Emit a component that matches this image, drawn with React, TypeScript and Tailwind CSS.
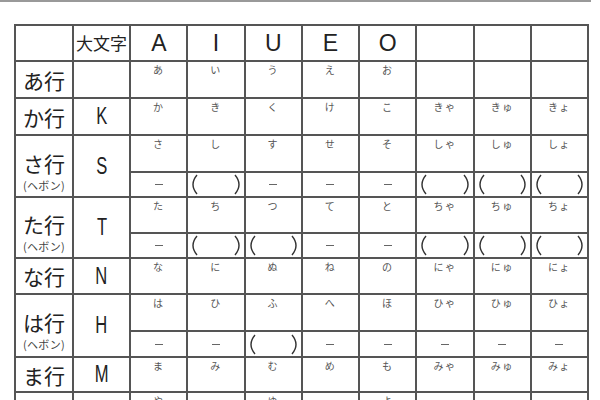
import React from "react"

type Row = {
  label: string
  letter: string
  kana: string[]
  sub?: string[]
  h: string
  subH?: string
}

const rows: Row[] = [
  { label: "あ行", letter: "", kana: ["あ", "い", "う", "え", "お", "", "", ""], h: "h-[35px]" },
  { label: "か行", letter: "K", kana: ["か", "き", "く", "け", "こ", "きゃ", "きゅ", "きょ"], h: "h-[35px]" },
  {
    label: "さ行",
    letter: "S",
    kana: ["さ", "し", "す", "せ", "そ", "しゃ", "しゅ", "しょ"],
    sub: ["-", "b", "-", "-", "-", "b", "b", "b"],
    h: "h-[35px]",
    subH: "h-[23px]",
  },
  {
    label: "た行",
    letter: "T",
    kana: ["た", "ち", "つ", "て", "と", "ちゃ", "ちゅ", "ちょ"],
    sub: ["-", "b", "b", "-", "-", "b", "b", "b"],
    h: "h-[34px]",
    subH: "h-[23px]",
  },
  { label: "な行", letter: "N", kana: ["な", "に", "ぬ", "ね", "の", "にゃ", "にゅ", "にょ"], h: "h-[34px]" },
  {
    label: "は行",
    letter: "H",
    kana: ["は", "ひ", "ふ", "へ", "ほ", "ひゃ", "ひゅ", "ひょ"],
    sub: ["-", "-", "b", "-", "-", "-", "-", "-"],
    h: "h-[35px]",
    subH: "h-[24px]",
  },
  { label: "ま行", letter: "M", kana: ["ま", "み", "む", "め", "も", "みゃ", "みゅ", "みょ"], h: "h-[33px]" },
  { label: "や行", letter: "Y", kana: ["や", "", "ゆ", "", "よ", "", "", ""], h: "h-[35px]" },
]

const jp = "font-['Noto_Sans_CJK_JP',sans-serif]"

function Bracket({ right }: { right?: boolean }) {
  return (
    <svg width="10" height="21" viewBox="0 0 10 21" className="shrink-0">
      <path
        d={right ? "M2 1 Q10 10.5 2 20" : "M8 1 Q0 10.5 8 20"}
        fill="none"
        stroke="#333"
        strokeWidth="1.4"
      />
    </svg>
  )
}

function SubCell({ v, h }: { v: string; h?: string }) {
  if (v === "b") {
    return (
      <div className={`bg-white flex items-center justify-between px-[1px] ${h}`}>
        <Bracket />
        <Bracket right />
      </div>
    )
  }
  return (
    <div className={`bg-white flex items-center justify-center ${h}`}>
      <div className="w-[8px] h-px bg-[#666]" />
    </div>
  )
}

export default function App() {
  return (
    <div className="w-[600px] h-[400px] overflow-hidden bg-white">
      <div className="w-[591px] h-[2px] bg-[#999]" />
      <div className="ml-[14px] mt-[22px] w-[575px] p-[2px] bg-[#555] grid grid-cols-[56px_repeat(9,1fr)] gap-[2px]">
        <div className="bg-white h-[34px]" />
        <div className={`bg-white h-[34px] flex items-center justify-center text-[17px] text-[#222] ${jp}`}>
          大文字
        </div>
        {["A", "I", "U", "E", "O"].map((l) => (
          <div
            key={l}
            className="bg-white h-[34px] flex items-center justify-center text-[23px] font-light text-[#222] font-['Liberation_Sans',sans-serif]"
          >
            {l}
          </div>
        ))}
        <div className="bg-white h-[34px]" />
        <div className="bg-white h-[34px]" />
        <div className="bg-white h-[34px]" />

        {rows.map((r) => {
          const span = r.sub ? "row-span-2 h-auto" : r.h
          return (
            <React.Fragment key={r.label}>
              <div className={`bg-white flex flex-col items-center justify-center ${span} ${r.sub ? "pt-[10px]" : ""} ${jp}`}>
                <span className="text-[21px] leading-[24px] text-[#222]">{r.label}</span>
                {r.sub && (
                  <span className="mt-[3px] text-[11px] leading-[14px] tracking-[0.3px] text-[#444]">(ヘボン)</span>
                )}
              </div>
              <div className={`bg-white flex items-center justify-center ${span}`}>
                <span className="inline-block scale-x-[0.72] text-[23px] text-[#222] font-['Liberation_Sans',sans-serif]">
                  {r.letter}
                </span>
              </div>
              {r.kana.map((k, i) => (
                <div
                  key={i}
                  className={`bg-white flex justify-center pt-[1px] text-[10px] leading-[14px] tracking-[1.5px] text-[#555] ${r.h} ${jp}`}
                >
                  {k}
                </div>
              ))}
              {r.sub && r.sub.map((v, i) => <SubCell key={`s${i}`} v={v} h={r.subH} />)}
            </React.Fragment>
          )
        })}
      </div>
    </div>
  )
}
